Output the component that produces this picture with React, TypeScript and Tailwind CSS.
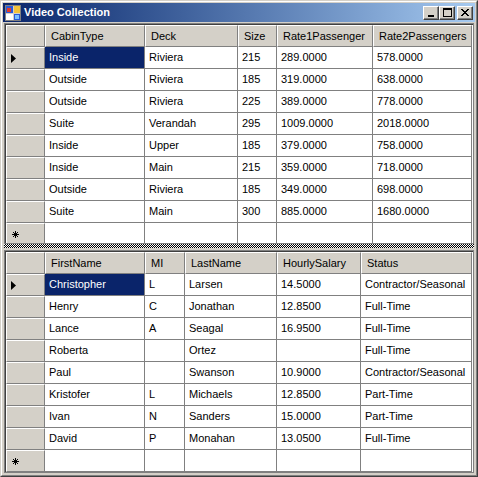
import React from "react";

type Grid = {
  cols: { name: string; w: number }[];
  rows: string[][];
  bodyH: number;
};

const cabins: Grid = {
  cols: [
    { name: "CabinType", w: 100 },
    { name: "Deck", w: 93 },
    { name: "Size", w: 39 },
    { name: "Rate1Passenger", w: 96 },
    { name: "Rate2Passengers", w: 99 },
  ],
  rows: [
    ["Inside", "Riviera", "215", "289.0000", "578.0000"],
    ["Outside", "Riviera", "185", "319.0000", "638.0000"],
    ["Outside", "Riviera", "225", "389.0000", "778.0000"],
    ["Suite", "Verandah", "295", "1009.0000", "2018.0000"],
    ["Inside", "Upper", "185", "379.0000", "758.0000"],
    ["Inside", "Main", "215", "359.0000", "718.0000"],
    ["Outside", "Riviera", "185", "349.0000", "698.0000"],
    ["Suite", "Main", "300", "885.0000", "1680.0000"],
  ],
  bodyH: 196,
};

const staff: Grid = {
  cols: [
    { name: "FirstName", w: 100 },
    { name: "MI", w: 40 },
    { name: "LastName", w: 92 },
    { name: "HourlySalary", w: 84 },
    { name: "Status", w: 111 },
  ],
  rows: [
    ["Christopher", "L", "Larsen", "14.5000", "Contractor/Seasonal"],
    ["Henry", "C", "Jonathan", "12.8500", "Full-Time"],
    ["Lance", "A", "Seagal", "16.9500", "Full-Time"],
    ["Roberta", "", "Ortez", "", "Full-Time"],
    ["Paul", "", "Swanson", "10.9000", "Contractor/Seasonal"],
    ["Kristofer", "L", "Michaels", "12.8500", "Part-Time"],
    ["Ivan", "N", "Sanders", "15.0000", "Part-Time"],
    ["David", "P", "Monahan", "13.0500", "Full-Time"],
  ],
  bodyH: 198,
};

function RowHead({ mark }: { mark?: "current" | "new" }) {
  return (
    <div className="w-[39px] h-[22px] shrink-0 bg-[#d4d0c8] border-t border-l border-t-white border-l-white border-r border-b border-r-[#808080] border-b-[#808080] flex items-center">
      {mark === "current" && (
        <svg width="5" height="9" viewBox="0 0 5 9" className="ml-[4px]">
          <path d="M0 0 L5 4.5 L0 9 Z" fill="#000" />
        </svg>
      )}
      {mark === "new" && (
        <svg width="7" height="7" viewBox="0 0 7 7" className="ml-[5px]" shapeRendering="crispEdges">
          <path d="M3 0h1v7H3zM0 3h7v1H0zM1 1h1v1H1zM5 1h1v1H5zM1 5h1v1H1zM5 5h1v1H5zM2 2h3v3H2z" fill="#000" />
        </svg>
      )}
    </div>
  );
}

function DataGrid({ grid }: { grid: Grid }) {
  return (
    <div className="mx-px border border-[#808080]">
      <div className="border-t border-l border-[#404040] bg-white">
        {/* header */}
        <div className="flex">
          <div className="w-[39px] h-[22px] shrink-0 bg-[#d4d0c8] border-t border-l border-white border-r border-b border-r-[#808080] border-b-[#808080]" />
          {grid.cols.map((c) => (
            <div
              key={c.name}
              style={{ width: c.w }}
              className="h-[22px] shrink-0 bg-[#d4d0c8] border-t border-l border-white border-r border-b border-r-[#808080] border-b-[#808080] pl-[5px] flex items-center whitespace-nowrap overflow-hidden"
            >
              {c.name}
            </div>
          ))}
        </div>
        {/* rows */}
        <div className="overflow-hidden" style={{ height: grid.bodyH }}>
          {grid.rows.map((r, i) => (
            <div key={i} className="flex">
              <RowHead mark={i === 0 ? "current" : undefined} />
              {r.map((v, j) => (
                <div
                  key={j}
                  style={{ width: grid.cols[j].w }}
                  className={`h-[22px] shrink-0 border-r border-b border-[#808080] pl-[4px] flex items-center whitespace-nowrap overflow-hidden ${
                    i === 0 && j === 0 ? "bg-[#0a246a] text-white" : "bg-white text-black"
                  }`}
                >
                  {v}
                </div>
              ))}
            </div>
          ))}
          <div className="flex">
            <RowHead mark="new" />
            {grid.cols.map((c) => (
              <div
                key={c.name}
                style={{ width: c.w }}
                className="h-[22px] shrink-0 border-r border-b border-[#808080] bg-white"
              />
            ))}
          </div>
        </div>
      </div>
    </div>
  );
}

function CaptionButton({ children, className = "" }: { children: React.ReactNode; className?: string }) {
  return (
    <div className={`w-[16px] h-[14px] bg-[#d4d0c8] border-t border-l border-t-white border-l-white border-r border-b border-r-[#404040] border-b-[#404040] shadow-[inset_-1px_-1px_0_#808080] flex items-center justify-center ${className}`}>
      {children}
    </div>
  );
}

function FormIcon() {
  return (
    <svg width="16" height="16" viewBox="0 0 16 16" shapeRendering="crispEdges">
      <rect x="0.5" y="0.5" width="15" height="15" fill="#d4d0c8" stroke="#808080" />
      <rect x="1" y="1" width="7" height="7" fill="#2a5ad7" />
      <rect x="2" y="3" width="4" height="4" fill="#e23a2a" />
      <rect x="9" y="1" width="6" height="7" fill="#f2c23a" />
      <rect x="1" y="9" width="7" height="6" fill="#ffffff" />
      <rect x="9" y="9" width="6" height="6" fill="#2a5ad7" />
      <rect x="10" y="10" width="4" height="4" fill="#7cc0ff" />
    </svg>
  );
}

export default function App() {
  return (
    <div
      className="w-[478px] h-[477px] bg-[#d4d0c8] text-[11px] text-black border border-t-[#d4d0c8] border-l-[#d4d0c8] border-r-[#404040] border-b-[#404040] leading-none"
      style={{ fontFamily: '"Liberation Sans", Arial, sans-serif' }}
    >
      <div className="h-full border border-t-white border-l-white border-r-[#808080] border-b-[#808080] pt-px px-px">
        {/* title bar */}
        <div className="h-[19px] bg-gradient-to-r from-[#0a246a] to-[#a6caf0] flex items-center pl-[2px] pr-[2px]">
          <FormIcon />
          <span className="ml-[3px] text-white font-bold text-[11px]">Video Collection</span>
          <div className="ml-auto flex items-center">
            <CaptionButton>
              <div className="w-[6px] h-[2px] bg-black mt-[6px] -ml-[1px]" />
            </CaptionButton>
            <CaptionButton>
              <div className="w-[9px] h-[9px] border border-t-2 border-black" />
            </CaptionButton>
            <CaptionButton className="ml-[2px]">
              <svg width="8" height="7" viewBox="0 0 8 7" shapeRendering="crispEdges">
                <path d="M0 0h2v1H0zM6 0h2v1H6zM1 1h2v1H1zM5 1h2v1H5zM2 2h4v1H2zM3 3h2v1H3zM2 4h4v1H2zM1 5h2v1H1zM5 5h2v1H5zM0 6h2v1H0zM6 6h2v1H6z" fill="#000" />
              </svg>
            </CaptionButton>
          </div>
        </div>

        <div className="mt-px">
          <DataGrid grid={cabins} />
          {/* splitter */}
          <div className="h-[4px] mx-px bg-[repeating-conic-gradient(#000_0_25%,#fff_0_50%)] bg-[length:2px_2px]" />
          <div className="h-[2px]" />
          <DataGrid grid={staff} />
        </div>
      </div>
    </div>
  );
}
